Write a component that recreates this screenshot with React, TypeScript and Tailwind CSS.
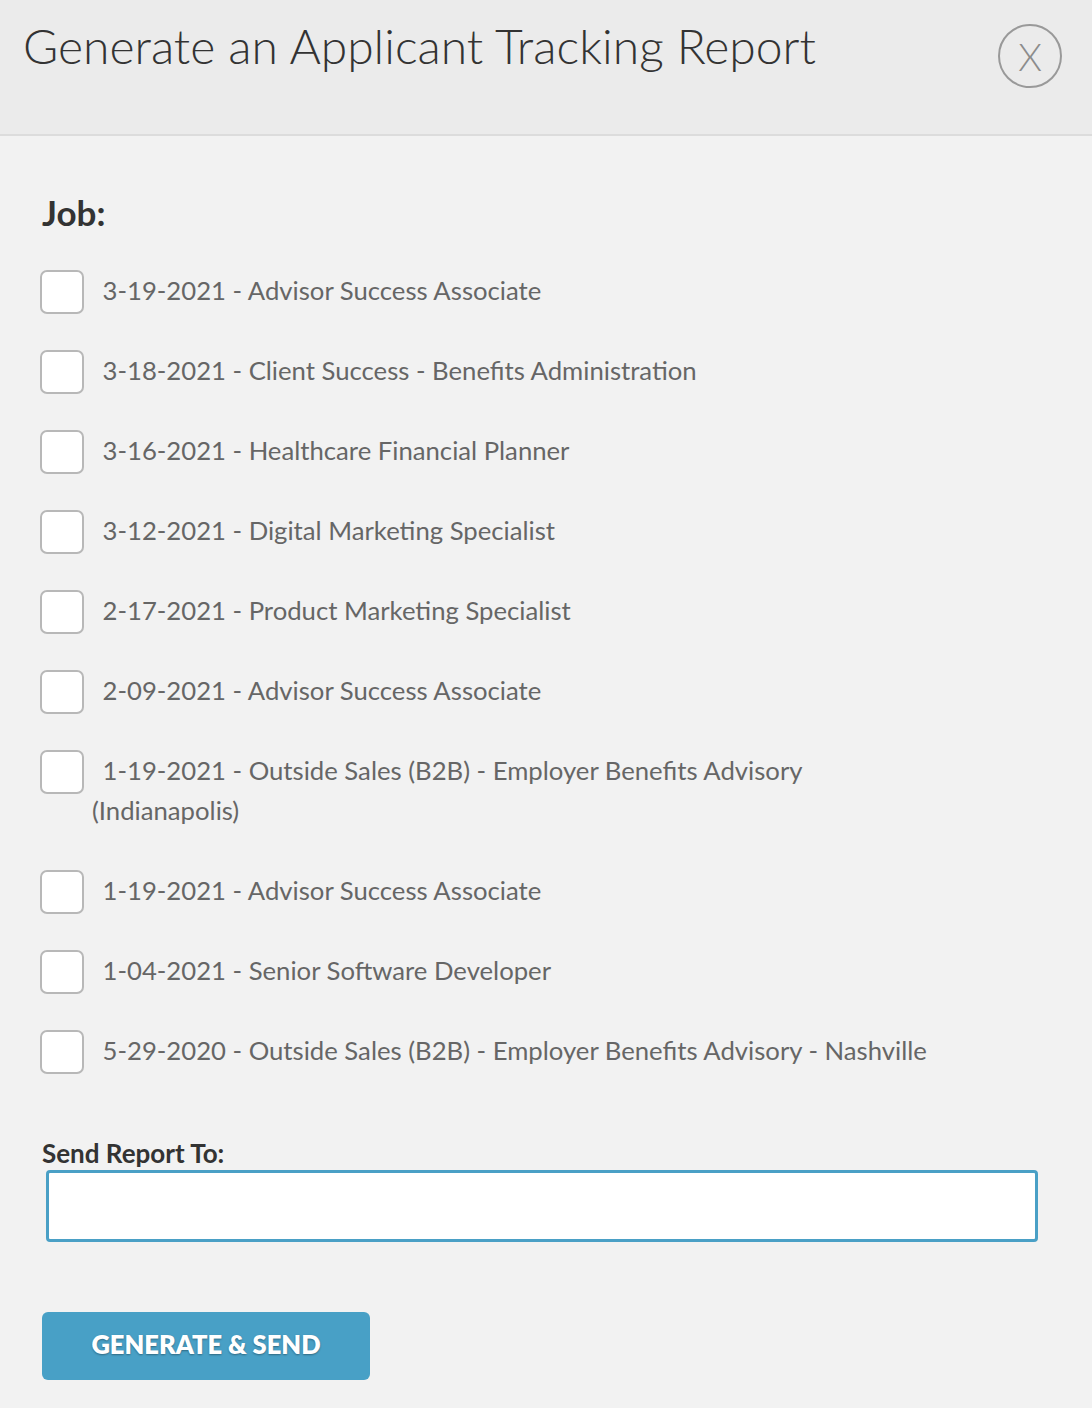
const jobs = [
  '3-19-2021 - Advisor Success Associate',
  '3-18-2021 - Client Success - Benefits Administration',
  '3-16-2021 - Healthcare Financial Planner',
  '3-12-2021 - Digital Marketing Specialist',
  '2-17-2021 - Product Marketing Specialist',
  '2-09-2021 - Advisor Success Associate',
  '1-19-2021 - Outside Sales (B2B) - Employer Benefits Advisory (Indianapolis)',
  '1-19-2021 - Advisor Success Associate',
  '1-04-2021 - Senior Software Developer',
  '5-29-2020 - Outside Sales (B2B) - Employer Benefits Advisory - Nashville',
];

export default function App() {
  return (
    <div className="min-h-[1408px] w-full bg-[#f2f2f2] font-['Lato','Liberation_Sans',sans-serif]">
      {/* Header */}
      <header className="flex h-[136px] items-start justify-between border-b-2 border-[#dcdcdc] bg-[#ebebeb] pl-[23px] pr-[30px]">
        <h1 className="mt-[14px] text-[48px] font-light leading-[64px] text-[#333]">
          Generate an Applicant Tracking Report
        </h1>
        <button className="mt-[24px] flex h-[64px] w-[64px] items-center justify-center rounded-full border-2 border-[#999] text-[38px] font-light leading-none text-[#8c8c8c]">
          X
        </button>
      </header>

      {/* Body */}
      <main className="px-[40px] pt-[54px]">
        <h2 className="pl-[2px] text-[35px] font-bold leading-[44px] text-[#333]">Job:</h2>

        <div className="mt-[36px] flex flex-col gap-[40px]">
          {jobs.map((job, i) => (
            <label
              key={i}
              className="block max-w-[900px] pl-[52px] text-[25.7px] leading-[40px] text-[#666]"
            >
              <span className="relative top-[-1px] -my-[6px] ml-[-52px] mr-[12px] inline-block h-[44px] w-[44px] rounded-[7px] border-2 border-[#b8b8b8] bg-white align-middle" />
              {' '}
              {job}
            </label>
          ))}
        </div>

        <div className="mt-[66px]">
          <div className="pl-[2px] text-[26px] font-bold leading-[34px] text-[#333]">Send Report To:</div>
          <input
            type="text"
            className="ml-[6px] block h-[72px] w-[992px] rounded-[4px] border-[3px] border-[#4aa0c6] bg-white outline-none"
          />
        </div>

        <button className="mt-[70px] ml-[2px] h-[68px] w-[328px] rounded-[6px] bg-[#48a0c6] pb-[4px] text-[25.5px] font-extrabold uppercase text-white [text-shadow:0_1px_2px_rgba(0,0,0,0.35)]">
          Generate &amp; Send
        </button>
      </main>
    </div>
  );
}
